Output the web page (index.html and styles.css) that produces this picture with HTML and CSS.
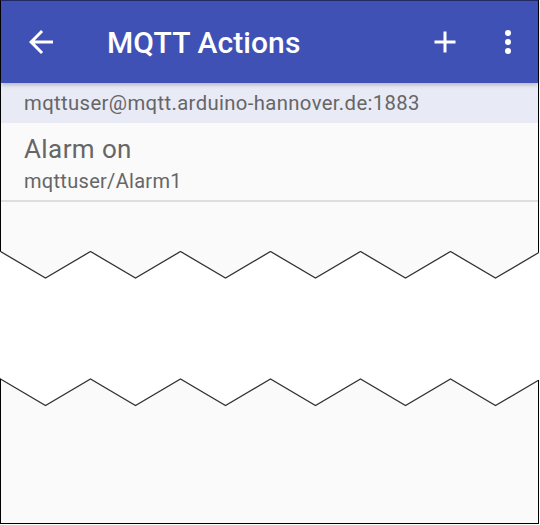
FILE: index.html
```html
<!DOCTYPE html>
<html>
<head>
<meta charset="utf-8">
<link rel="stylesheet" href="styles.css">
</head>
<body>
<div class="page">
  <div class="top-card">
    <header class="appbar">
      <svg class="icon back" viewBox="0 0 24 24"><path d="M20 11H7.830l5.59-5.59L12 4l-8 8 8 8 1.41-1.41L7.83 13H20v-2z" fill="#fff"/></svg>
      <div class="title">MQTT Actions</div>
      <svg class="icon add" viewBox="0 0 24 24"><path d="M19 13h-6v6h-2v-6H5v-2h6V5h2v6h6v2z" fill="#fff"/></svg>
      <svg class="icon more" viewBox="0 0 24 24"><circle cx="12" cy="6" r="2" fill="#fff"/><circle cx="12" cy="12" r="2" fill="#fff"/><circle cx="12" cy="18" r="2" fill="#fff"/></svg>
    </header>
    <div class="subheader">mqttuser@mqtt.arduino-hannover.de:1883</div>
    <div class="item">
      <div class="item-title">Alarm on</div>
      <div class="item-sub">mqttuser/Alarm1</div>
    </div>
  </div>
  <svg class="tear tear-down" width="540" height="30" viewBox="0 0 540 30">
    <polygon fill="#fafafa" points="0.5,0 0.5,0.5 45.5,27 90.5,0.5 135.5,27 180.5,0.5 225.5,27 270.5,0.5 315.5,27 360.5,0.5 405.5,27 450.5,0.5 495.5,27 538.5,1.7 538.5,0"/>
    <polyline fill="none" stroke="#333" stroke-width="1.3" points="0.5,0.5 45.5,27 90.5,0.5 135.5,27 180.5,0.5 225.5,27 270.5,0.5 315.5,27 360.5,0.5 405.5,27 450.5,0.5 495.5,27 538.5,1.7"/>
    <path d="M0.5 0V0.6M538.5 0V1.8" stroke="#000" stroke-width="1"/>
  </svg>
  <div class="gap"></div>
  <svg class="tear tear-up" width="540" height="30" viewBox="0 0 540 30">
    <polygon fill="#fafafa" points="0.5,2 45.5,28.5 90.5,2 135.5,28.5 180.5,2 225.5,28.5 270.5,2 315.5,28.5 360.5,2 405.5,28.5 450.5,2 495.5,28.5 538.5,3.2 538.5,30 0.5,30"/>
    <polyline fill="none" stroke="#333" stroke-width="1.3" points="0.5,2 45.5,28.5 90.5,2 135.5,28.5 180.5,2 225.5,28.5 270.5,2 315.5,28.5 360.5,2 405.5,28.5 450.5,2 495.5,28.5 538.5,3.2"/>
    <path d="M0.5 1.5V30M538.5 3V30" stroke="#000" stroke-width="1"/>
  </svg>
  <div class="bottom-card"></div>
</div>
</body>
</html>
```

FILE: styles.css
```css
html, body {
  margin: 0;
  padding: 0;
  background: #ffffff;
}
body {
  width: 540px;
  height: 525px;
  overflow: hidden;
  font-family: Roboto, "Noto Sans", sans-serif;
}
.page {
  display: flex;
  flex-direction: column;
  width: 540px;
}
.top-card {
  width: 537px;
  height: 250px;
  border-top: 1px solid #232b66;
  border-left: 1px solid #000;
  border-right: 1px solid #000;
  background: #fafafa;
  display: flex;
  flex-direction: column;
}
.appbar {
  position: relative;
  z-index: 2;
  height: 82px;
  background: #3f51b5;
  display: flex;
  align-items: center;
  box-shadow: 0 2px 4px rgba(0, 0, 0, 0.22);
}
.icon {
  width: 36px;
  height: 36px;
  flex: none;
}
.back {
  margin-left: 22px;
}
.title {
  margin-left: 48px;
  color: #ffffff;
  font-size: 30px;
  font-weight: 500;
  letter-spacing: 0.1px;
  flex: 1;
}
.add {
  margin-right: 27px;
}
.more {
  margin-right: 12px;
}
.subheader {
  height: 40px;
  line-height: 40px;
  background: #e8eaf6;
  color: #666666;
  font-size: 20.3px;
  letter-spacing: 0.37px;
  padding-left: 23px;
}
.item {
  padding: 11px 23px 7px;
  border-bottom: 2px solid #dedede;
  display: flex;
  flex-direction: column;
  gap: 5px;
  color: #666666;
}
.item-title {
  font-size: 26px;
  line-height: 30px;
  letter-spacing: 0.4px;
}
.item-sub {
  font-size: 20px;
  line-height: 24px;
  letter-spacing: 0.3px;
}
.tear {
  display: block;
  flex: none;
}
.gap {
  height: 96px;
}
.bottom-card {
  width: 537px;
  height: 116px;
  background: #fafafa;
  border-left: 1px solid #000;
  border-right: 1px solid #000;
  border-bottom: 1px solid #000;
}
```
